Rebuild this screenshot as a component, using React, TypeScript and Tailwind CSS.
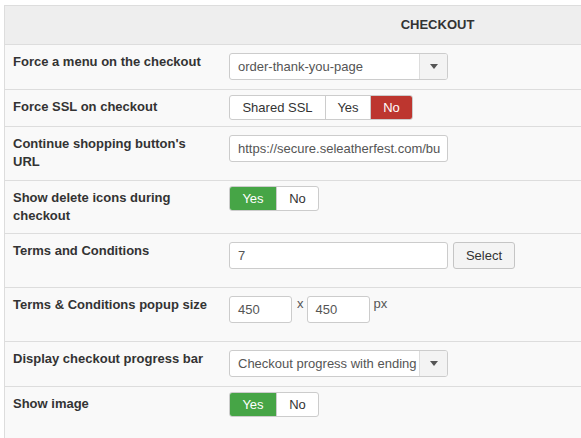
import React from 'react';

const font = { fontFamily: '"Liberation Sans", Arial, Helvetica, sans-serif' };

const Caret = () => (
  <svg width="8" height="5" viewBox="0 0 8 5" className="block">
    <path d="M0 0h8L4 5z" fill="#555" />
  </svg>
);

const SelectBox: React.FC<{ value: string }> = ({ value }) => (
  <div className="flex h-[27px] w-[219px] overflow-hidden rounded-[3px] border border-[#ccc] bg-white">
    <div className="flex-1 overflow-hidden whitespace-nowrap pl-[8px] text-[13px] leading-[25px] text-[#555]">
      {value}
    </div>
    <div className="flex w-[28px] items-center justify-center border-l border-[#ddd] bg-[#f3f3f3]">
      <Caret />
    </div>
  </div>
);

const TextBox: React.FC<{ value: string; width: string }> = ({ value, width }) => (
  <div
    className={`h-[27px] ${width} overflow-hidden whitespace-nowrap rounded-[3px] border border-[#ccc] bg-white pl-[8px] text-[13px] leading-[25px] text-[#555]`}
  >
    {value}
  </div>
);

type Opt = { label: string; w: string; active?: 'red' | 'green' };

const BtnGroup: React.FC<{ options: Opt[] }> = ({ options }) => (
  <div className="mt-[-3px] flex h-[25px] w-fit overflow-hidden rounded-[3px] border border-[#ccc] bg-white">
    {options.map((o, i) => (
      <div
        key={o.label}
        className={`${o.w} flex items-center justify-center text-[13px] ${
          i > 0 ? 'border-l border-[#ccc]' : ''
        } ${
          o.active === 'red'
            ? 'bg-[#bd362f] text-white'
            : o.active === 'green'
              ? 'bg-[#46a546] text-white'
              : 'text-[#333]'
        }`}
      >
        {o.label}
      </div>
    ))}
  </div>
);

const yesNo: Opt[] = [
  { label: 'Yes', w: 'w-[46px]', active: 'green' },
  { label: 'No', w: 'w-[42px]' },
];

const rows: { label: string; h: string; control: React.ReactNode }[] = [
  { label: 'Force a menu on the checkout', h: 'h-[45px]', control: <SelectBox value="order-thank-you-page" /> },
  {
    label: 'Force SSL on checkout',
    h: 'h-[37px]',
    control: (
      <BtnGroup
        options={[
          { label: 'Shared SSL', w: 'w-[95px]' },
          { label: 'Yes', w: 'w-[45px]' },
          { label: 'No', w: 'w-[42px]', active: 'red' },
        ]}
      />
    ),
  },
  {
    label: "Continue shopping button's URL",
    h: 'h-[54px]',
    control: <TextBox value="https://secure.seleatherfest.com/bu" width="w-[219px]" />,
  },
  { label: 'Show delete icons during checkout', h: 'h-[53px]', control: <BtnGroup options={yesNo} /> },
  {
    label: 'Terms and Conditions',
    h: 'h-[54px]',
    control: (
      <div className="flex gap-[5px]">
        <TextBox value="7" width="w-[219px]" />
        <div className="flex h-[27px] w-[62px] items-center justify-center rounded-[3px] border border-[#c5c5c5] bg-[#f4f4f4] text-[13px] text-[#333]">
          Select
        </div>
      </div>
    ),
  },
  {
    label: 'Terms & Conditions popup size',
    h: 'h-[54px]',
    control: (
      <div className="flex items-start text-[13px] leading-[15px] text-[#555]">
        <TextBox value="450" width="w-[63px]" />
        <span className="pl-[5px] pr-[3px]">x</span>
        <TextBox value="450" width="w-[63px]" />
        <span className="pl-[4px]">px</span>
      </div>
    ),
  },
  {
    label: 'Display checkout progress bar',
    h: 'h-[45px]',
    control: <SelectBox value="Checkout progress with ending" />,
  },
  { label: 'Show image', h: 'h-[60px]', control: <BtnGroup options={yesNo} /> },
];

export default function App() {
  return (
    <div className="h-[438px] w-[581px] overflow-hidden bg-white pl-[4px] pt-[5px]" style={font}>
      <div className="w-[650px] border-l border-t border-[#ddd] bg-[#f9f9f9]">
        <div className="grid h-[38px] grid-cols-[216px_1fr] bg-[#eeeeee]">
          <div />
          <div className="flex items-center justify-center text-[13px] font-bold text-[#333]">CHECKOUT</div>
        </div>
        {rows.map((r) => (
          <div key={r.label} className={`grid ${r.h} grid-cols-[216px_1fr] border-t border-[#ddd]`}>
            <div className="pl-[8px] pr-[13px] pt-[8px] text-[13px] font-bold leading-[18px] text-[#333]">
              {r.label}
            </div>
            <div className="pl-[8px] pt-[8px]">{r.control}</div>
          </div>
        ))}
      </div>
    </div>
  );
}
